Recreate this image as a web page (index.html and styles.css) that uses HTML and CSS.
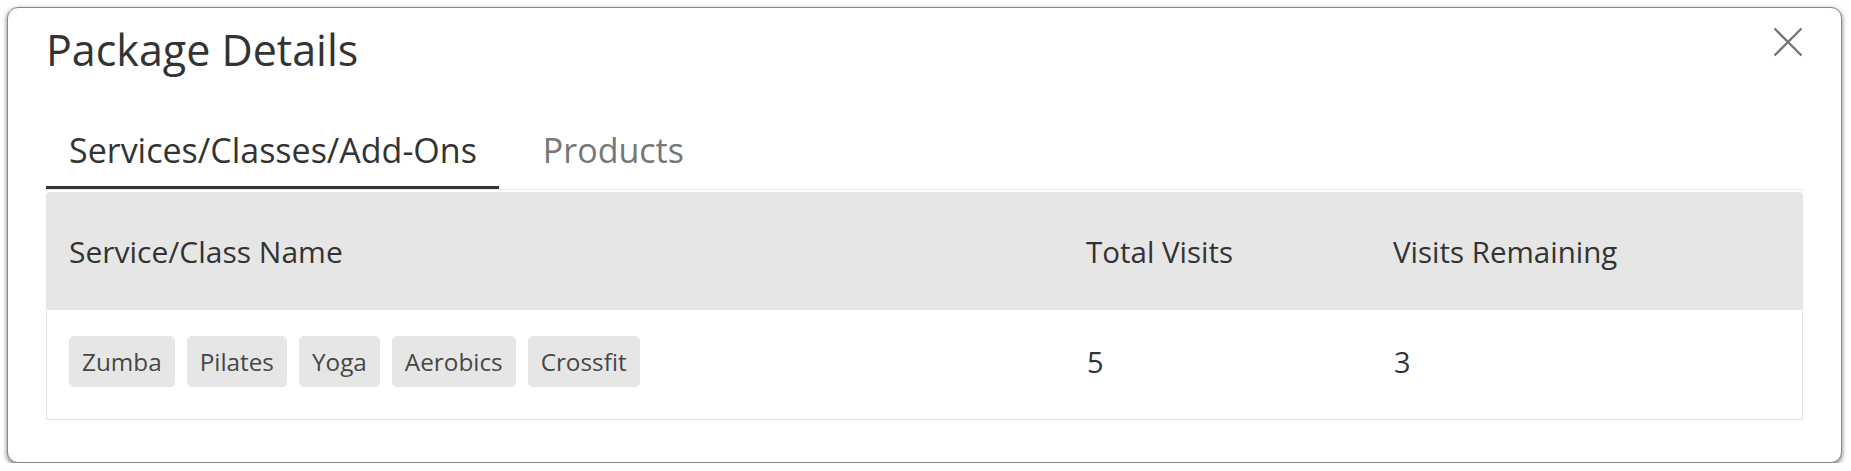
FILE: index.html
```html
<!DOCTYPE html>
<html>
<head>
<meta charset="utf-8">
<link rel="stylesheet" href="styles.css">
</head>
<body>
<div class="modal">
  <button class="close" aria-label="Close">
    <svg width="30" height="30" viewBox="0 0 30 30"><path d="M1.5 1.5 L28.5 28.5 M28.5 1.5 L1.5 28.5" stroke="#777" stroke-width="2.4" fill="none"/></svg>
  </button>
  <h1 class="title">Package Details</h1>
  <div class="tabs">
    <div class="tab active">Services/Classes/Add-Ons</div>
    <div class="tab">Products</div>
  </div>
  <div class="table">
    <div class="row head">
      <div class="cell c1">Service/Class Name</div>
      <div class="cell c2">Total Visits</div>
      <div class="cell c3">Visits Remaining</div>
    </div>
    <div class="row body">
      <div class="cell c1">
        <div class="chips">
          <span class="chip">Zumba</span>
          <span class="chip">Pilates</span>
          <span class="chip">Yoga</span>
          <span class="chip">Aerobics</span>
          <span class="chip">Crossfit</span>
        </div>
      </div>
      <div class="cell c2 num">5</div>
      <div class="cell c3 num">3</div>
    </div>
  </div>
</div>
</body>
</html>
```

FILE: styles.css
```css
html, body {
  margin: 0;
  padding: 0;
  background: #ffffff;
}
body {
  font-family: "Open Sans", "Liberation Sans", sans-serif;
  color: #333333;
}
.modal {
  position: relative;
  box-sizing: border-box;
  margin: 7px 9px 0 7px;
  height: 456px;
  padding: 17px 38px 0 38px;
  background: #ffffff;
  border: 1px solid #888888;
  border-radius: 11px;
  box-shadow: 0 2px 5px rgba(0, 0, 0, 0.55);
}
.close {
  position: absolute;
  top: 19px;
  right: 38px;
  width: 30px;
  height: 30px;
  padding: 0;
  border: 0;
  background: transparent;
  display: block;
}
.close svg { display: block; }
.title {
  margin: 0;
  font-size: 43px;
  font-weight: 400;
  line-height: 50px;
  color: #333333;
}
.tabs {
  display: flex;
  gap: 21px;
  margin-top: 55px;
  border-bottom: 1px solid #e6e6e6;
}
.tab {
  padding: 0 22px 16px 23px;
  font-size: 34px;
  line-height: 40px;
  color: #777777;
  border-bottom: 3px solid transparent;
}
.tab.active {
  color: #333333;
  border-bottom-color: #333333;
}
.table {
  margin-top: 2px;
}
.row {
  display: flex;
  align-items: center;
}
.row.head {
  height: 118px;
  background: #e6e6e6;
  border-radius: 4px 4px 0 0;
  font-size: 29.5px;
  font-weight: 500;
  color: #333333;
}
.row.head .c1 { font-size: 30px; }
.row.body {
  height: 110px;
  box-sizing: border-box;
  padding-bottom: 7px;
  border: 1px solid #e3e3e3;
  border-top: 0;
}
.cell {
  box-sizing: border-box;
  padding-left: 23px;
}
.c1 { width: 1017px; }
.c2 { width: 307px; }
.c3 { flex: 1; }
.row.body .c1 { padding-left: 22px; }
.num {
  font-size: 29px;
  color: #333333;
}
.chips {
  display: flex;
  gap: 12px;
}
.chip {
  display: block;
  height: 51px;
  line-height: 51px;
  padding: 0 13px;
  background: #e6e6e6;
  border-radius: 5px;
  font-size: 24.3px;
  color: #474747;
}
```
